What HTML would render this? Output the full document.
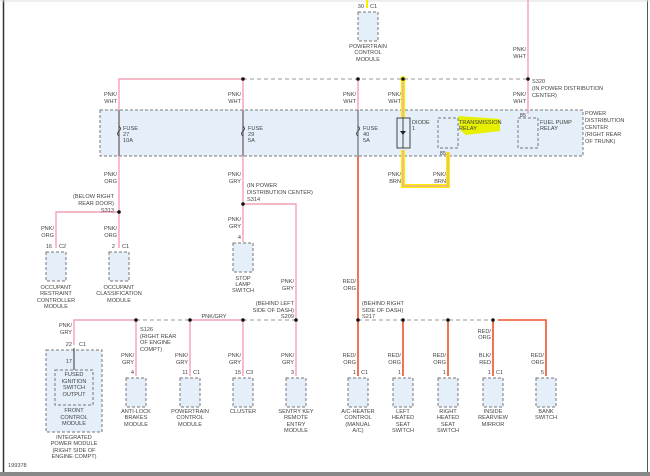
<!DOCTYPE html>
<html><head><style>
html,body{margin:0;padding:0;background:#fff;}
svg{display:block;font-family:"Liberation Sans",sans-serif;}
text{font-size:5.6px;fill:#444;}
.m{text-anchor:middle;}
.e{text-anchor:end;}
.pk{stroke:#f4a0b4;stroke-width:1.4;fill:none;}
.rd{stroke:#f0502a;stroke-width:1.6;fill:none;}
.ds{stroke:#999;stroke-width:1;stroke-dasharray:4,3;fill:none;}
.bx{fill:#e4eff9;stroke:#777;stroke-width:1;stroke-dasharray:3,2;}
.dot{fill:#111;}
</style></head><body>
<svg width="650" height="476" viewBox="0 0 650 476">
<rect width="650" height="476" fill="#fff"/>
<line x1="3.5" y1="0" x2="3.5" y2="472" stroke="#333" stroke-width="1.5"/>
<line x1="647.5" y1="0" x2="647.5" y2="472" stroke="#555" stroke-width="1"/>
<line x1="0" y1="1" x2="650" y2="1" stroke="#ddd" stroke-width="1"/>
<rect x="0" y="472" width="650" height="4" fill="#888"/>

<!-- PDC -->
<rect x="100" y="110" width="483" height="46" class="bx"/>
<text x="585" y="115">POWER</text><text x="585" y="122">DISTRIBUTION</text><text x="585" y="129">CENTER</text><text x="585" y="136">(RIGHT REAR</text><text x="585" y="143">OF TRUNK)</text>

<!-- highlight -->
<path d="M403 79 V118 M403 150 V186 H448 V152" stroke="#f6f000" stroke-width="4" fill="none"/>
<path d="M403 79 V118 M403 150 V186 H448 V152" stroke="#f4a0b4" stroke-width="1.2" fill="none"/>
<circle cx="403" cy="79" r="3" fill="#f6f000"/>
<polygon points="458,116 500,119 500,131 466,135 460,130" fill="#e6f000"/>

<!-- top bus -->
<path class="pk" d="M119 212 V79 H243"/>
<path class="ds" d="M243 79 H528"/>
<path class="pk" d="M528 0 V114"/>
<path class="pk" d="M243 79 V204 H296 V320"/>
<path class="pk" d="M243 204 V242"/>
<path class="pk" d="M119 212 V248 M119 212 H56 V248"/>
<line x1="358" y1="79" x2="358" y2="110" class="pk"/>
<path class="rd" d="M358 156 V376"/>
<line x1="358" y1="110" x2="358" y2="156" stroke="#555" stroke-width="1"/>
<line x1="119" y1="110" x2="119" y2="156" stroke="#555" stroke-width="1"/>
<line x1="243" y1="110" x2="243" y2="156" stroke="#555" stroke-width="1"/>
<circle class="dot" cx="243" cy="79" r="1.8"/><circle class="dot" cx="358" cy="79" r="1.8"/><circle class="dot" cx="403" cy="79" r="1.8"/><circle class="dot" cx="528" cy="79" r="1.8"/>
<text x="532" y="83">S320</text><text x="532" y="90">(IN POWER DISTRIBUTION</text><text x="532" y="97">CENTER)</text>
<text x="526" y="51" class="e">PNK/</text><text x="526" y="58" class="e">WHT</text>
<text x="117" y="96" class="e">PNK/</text><text x="117" y="103" class="e">WHT</text>
<text x="241" y="96" class="e">PNK/</text><text x="241" y="103" class="e">WHT</text>
<text x="356" y="96" class="e">PNK/</text><text x="356" y="103" class="e">WHT</text>
<text x="401" y="96" class="e">PNK/</text><text x="401" y="103" class="e">WHT</text>
<text x="526" y="96" class="e">PNK/</text><text x="526" y="103" class="e">WHT</text>

<!-- fuses -->
<g fill="none" stroke="#333" stroke-width="0.8">
<path d="M119 126 q3 3 0 5 q-3 3 0 5"/><path d="M243 126 q3 3 0 5 q-3 3 0 5"/><path d="M358 126 q3 3 0 5 q-3 3 0 5"/>
</g>
<text x="123" y="130">FUSE</text><text x="123" y="136">27</text><text x="123" y="142">10A</text>
<text x="248" y="130">FUSE</text><text x="248" y="136">29</text><text x="248" y="142">5A</text>
<text x="363" y="130">FUSE</text><text x="363" y="136">40</text><text x="363" y="142">5A</text>
<!-- diode -->
<rect x="397" y="118" width="13" height="30" fill="none" stroke="#444"/>
<line x1="403" y1="118" x2="403" y2="148" stroke="#444"/>
<polygon points="400,131 406,131 403,135" fill="#222"/>
<text x="412" y="124">DIODE</text><text x="412" y="130">1</text>
<rect x="438" y="118" width="20" height="30" class="bx"/>
<text x="459" y="124">TRANSMISSION</text><text x="459" y="130">RELAY</text>
<text x="446" y="155" class="e">85</text>
<rect x="518" y="118" width="20" height="30" class="bx"/>
<text x="540" y="124">FUEL PUMP</text><text x="540" y="130">RELAY</text>
<text x="526" y="117" class="e">85</text>
<text x="401" y="176" class="e">PNK/</text><text x="401" y="183" class="e">BRN</text>
<text x="446" y="176" class="e">PNK/</text><text x="446" y="183" class="e">BRN</text>

<!-- PCM top -->
<line x1="367" y1="0" x2="367" y2="8" stroke="#f6f000" stroke-width="2"/>
<rect x="358" y="12" width="20" height="29" class="bx"/>
<text x="364" y="8" class="e">30</text><text x="370" y="8">C1</text>
<text x="368" y="48" class="m">POWERTRAIN</text><text x="368" y="54" class="m">CONTROL</text><text x="368" y="61" class="m">MODULE</text>

<!-- left side labels -->
<text x="117" y="176" class="e">PNK/</text><text x="117" y="183" class="e">ORG</text>
<text x="114" y="198" class="e">(BELOW RIGHT</text><text x="114" y="205" class="e">REAR DOOR)</text><text x="114" y="212" class="e">S313</text>
<circle class="dot" cx="119" cy="212" r="1.8"/>
<text x="54" y="230" class="e">PNK/</text><text x="54" y="237" class="e">ORG</text>
<text x="117" y="230" class="e">PNK/</text><text x="117" y="237" class="e">ORG</text>
<text x="241" y="176" class="e">PNK/</text><text x="241" y="183" class="e">GRY</text>
<text x="247" y="187">(IN POWER</text><text x="247" y="194">DISTRIBUTION CENTER)</text><text x="247" y="201">S314</text>
<circle class="dot" cx="243" cy="204" r="1.8"/>
<text x="241" y="221" class="e">PNK/</text><text x="241" y="228" class="e">GRY</text>
<text x="294" y="283" class="e">PNK/</text><text x="294" y="290" class="e">GRY</text>
<text x="294" y="305" class="e">(BEHIND LEFT</text><text x="294" y="312" class="e">SIDE OF DASH)</text><text x="294" y="318" class="e">S209</text>

<rect x="46" y="252" width="20" height="29" class="bx"/><text x="52" y="248" class="e">16</text><text x="59" y="248">C2</text>
<text x="56" y="289" class="m">OCCUPANT</text><text x="56" y="295" class="m">RESTRAINT</text><text x="56" y="302" class="m">CONTROLLER</text><text x="56" y="308" class="m">MODULE</text>
<rect x="109" y="252" width="20" height="29" class="bx"/><text x="115" y="248" class="e">2</text><text x="122" y="248">C1</text>
<text x="119" y="289" class="m">OCCUPANT</text><text x="119" y="295" class="m">CLASSIFICATION</text><text x="119" y="302" class="m">MODULE</text>
<rect x="233" y="243" width="20" height="29" class="bx"/><text x="241" y="239" class="e">4</text>
<text x="243" y="280" class="m">STOP</text><text x="243" y="286" class="m">LAMP</text><text x="243" y="292" class="m">SWITCH</text>

<!-- S209 bus -->
<path class="pk" d="M74 345 V320 H136"/>
<path class="ds" d="M136 320 H190"/>
<path class="pk" d="M190 320 H243"/>
<path class="ds" d="M243 320 H296"/>
<path class="pk" d="M136 320 V376 M190 320 V376 M243 320 V376 M296 320 V376"/>
<circle class="dot" cx="136" cy="320" r="1.8"/><circle class="dot" cx="190" cy="320" r="1.8"/><circle class="dot" cx="243" cy="320" r="1.8"/><circle class="dot" cx="296" cy="320" r="1.8"/>
<text x="214" y="318" class="m">PNK/GRY</text>
<text x="140" y="331">S126</text><text x="140" y="338">(RIGHT REAR</text><text x="140" y="344">OF ENGINE</text><text x="140" y="351">COMPT)</text>
<text x="72" y="327" class="e">PNK/</text><text x="72" y="334" class="e">GRY</text>
<text x="134" y="357" class="e">PNK/</text><text x="134" y="364" class="e">GRY</text>
<text x="188" y="357" class="e">PNK/</text><text x="188" y="364" class="e">GRY</text>
<text x="241" y="357" class="e">PNK/</text><text x="241" y="364" class="e">GRY</text>
<text x="294" y="357" class="e">PNK/</text><text x="294" y="364" class="e">GRY</text>

<rect x="46" y="350" width="56" height="82" class="bx"/>
<rect x="55" y="370" width="38" height="35" fill="none" stroke="#777" stroke-dasharray="3,2"/>
<line x1="74" y1="348" x2="74" y2="370" stroke="#333"/>
<text x="72" y="346" class="e">22</text><text x="79" y="346">C1</text><text x="72" y="363" class="e">17</text>
<text x="74" y="376" class="m">FUSED</text><text x="74" y="383" class="m">IGNITION</text><text x="74" y="389" class="m">SWITCH</text><text x="74" y="396" class="m">OUTPUT</text>
<text x="74" y="412" class="m">FRONT</text><text x="74" y="419" class="m">CONTROL</text><text x="74" y="425" class="m">MODULE</text>
<text x="74" y="439" class="m">INTEGRATED</text><text x="74" y="445" class="m">POWER MODULE</text><text x="74" y="452" class="m">(RIGHT SIDE OF</text><text x="74" y="458" class="m">ENGINE COMPT)</text>

<rect x="126" y="378" width="20" height="29" class="bx"/><text x="134" y="374" class="e">4</text>
<text x="136" y="413" class="m">ANTI-LOCK</text><text x="136" y="419" class="m">BRAKES</text><text x="136" y="426" class="m">MODULE</text>
<rect x="180" y="378" width="20" height="29" class="bx"/><text x="188" y="374" class="e">11</text><text x="193" y="374">C1</text>
<text x="190" y="413" class="m">POWERTRAIN</text><text x="190" y="419" class="m">CONTROL</text><text x="190" y="426" class="m">MODULE</text>
<rect x="233" y="378" width="20" height="29" class="bx"/><text x="241" y="374" class="e">15</text><text x="246" y="374">C3</text>
<text x="243" y="413" class="m">CLUSTER</text>
<rect x="286" y="378" width="20" height="29" class="bx"/><text x="294" y="374" class="e">3</text>
<text x="296" y="413" class="m">SENTRY KEY</text><text x="296" y="419" class="m">REMOTE</text><text x="296" y="426" class="m">ENTRY</text><text x="296" y="432" class="m">MODULE</text>

<!-- S217 -->
<text x="356" y="283" class="e">RED/</text><text x="356" y="290" class="e">ORG</text>
<text x="362" y="305">(BEHIND RIGHT</text><text x="362" y="312">SIDE OF DASH)</text><text x="362" y="318">S217</text>
<path class="ds" d="M358 320 H493"/>
<path class="rd" d="M498 320 H546 V376 M403 320 V376 M448 320 V376 M493 320 V376"/>
<circle class="dot" cx="358" cy="320" r="1.8"/><circle class="dot" cx="403" cy="320" r="1.8"/><circle class="dot" cx="448" cy="320" r="1.8"/><circle class="dot" cx="493" cy="320" r="1.8"/>
<text x="491" y="333" class="e">RED/</text><text x="491" y="339" class="e">ORG</text>
<text x="491" y="357" class="e">BLK/</text><text x="491" y="364" class="e">RED</text>
<text x="356" y="357" class="e">RED/</text><text x="356" y="364" class="e">ORG</text>
<text x="401" y="357" class="e">RED/</text><text x="401" y="364" class="e">ORG</text>
<text x="446" y="357" class="e">RED/</text><text x="446" y="364" class="e">ORG</text>
<text x="544" y="357" class="e">RED/</text><text x="544" y="364" class="e">ORG</text>

<rect x="348" y="378" width="20" height="29" class="bx"/><text x="356" y="374" class="e">1</text><text x="361" y="374">C1</text>
<text x="358" y="413" class="m">A/C-HEATER</text><text x="358" y="419" class="m">CONTROL</text><text x="358" y="426" class="m">(MANUAL</text><text x="358" y="432" class="m">A/C)</text>
<rect x="393" y="378" width="20" height="29" class="bx"/><text x="401" y="374" class="e">1</text>
<text x="403" y="413" class="m">LEFT</text><text x="403" y="419" class="m">HEATED</text><text x="403" y="426" class="m">SEAT</text><text x="403" y="432" class="m">SWITCH</text>
<rect x="438" y="378" width="20" height="29" class="bx"/><text x="446" y="374" class="e">1</text>
<text x="448" y="413" class="m">RIGHT</text><text x="448" y="419" class="m">HEATED</text><text x="448" y="426" class="m">SEAT</text><text x="448" y="432" class="m">SWITCH</text>
<rect x="483" y="378" width="20" height="29" class="bx"/><text x="491" y="374" class="e">1</text><text x="496" y="374">C1</text>
<text x="493" y="413" class="m">INSIDE</text><text x="493" y="419" class="m">REARVIEW</text><text x="493" y="426" class="m">MIRROR</text>
<rect x="536" y="378" width="20" height="29" class="bx"/><text x="544" y="374" class="e">5</text>
<text x="546" y="413" class="m">BANK</text><text x="546" y="419" class="m">SWITCH</text>

<text x="8" y="467">199378</text>
</svg>
</body></html>
